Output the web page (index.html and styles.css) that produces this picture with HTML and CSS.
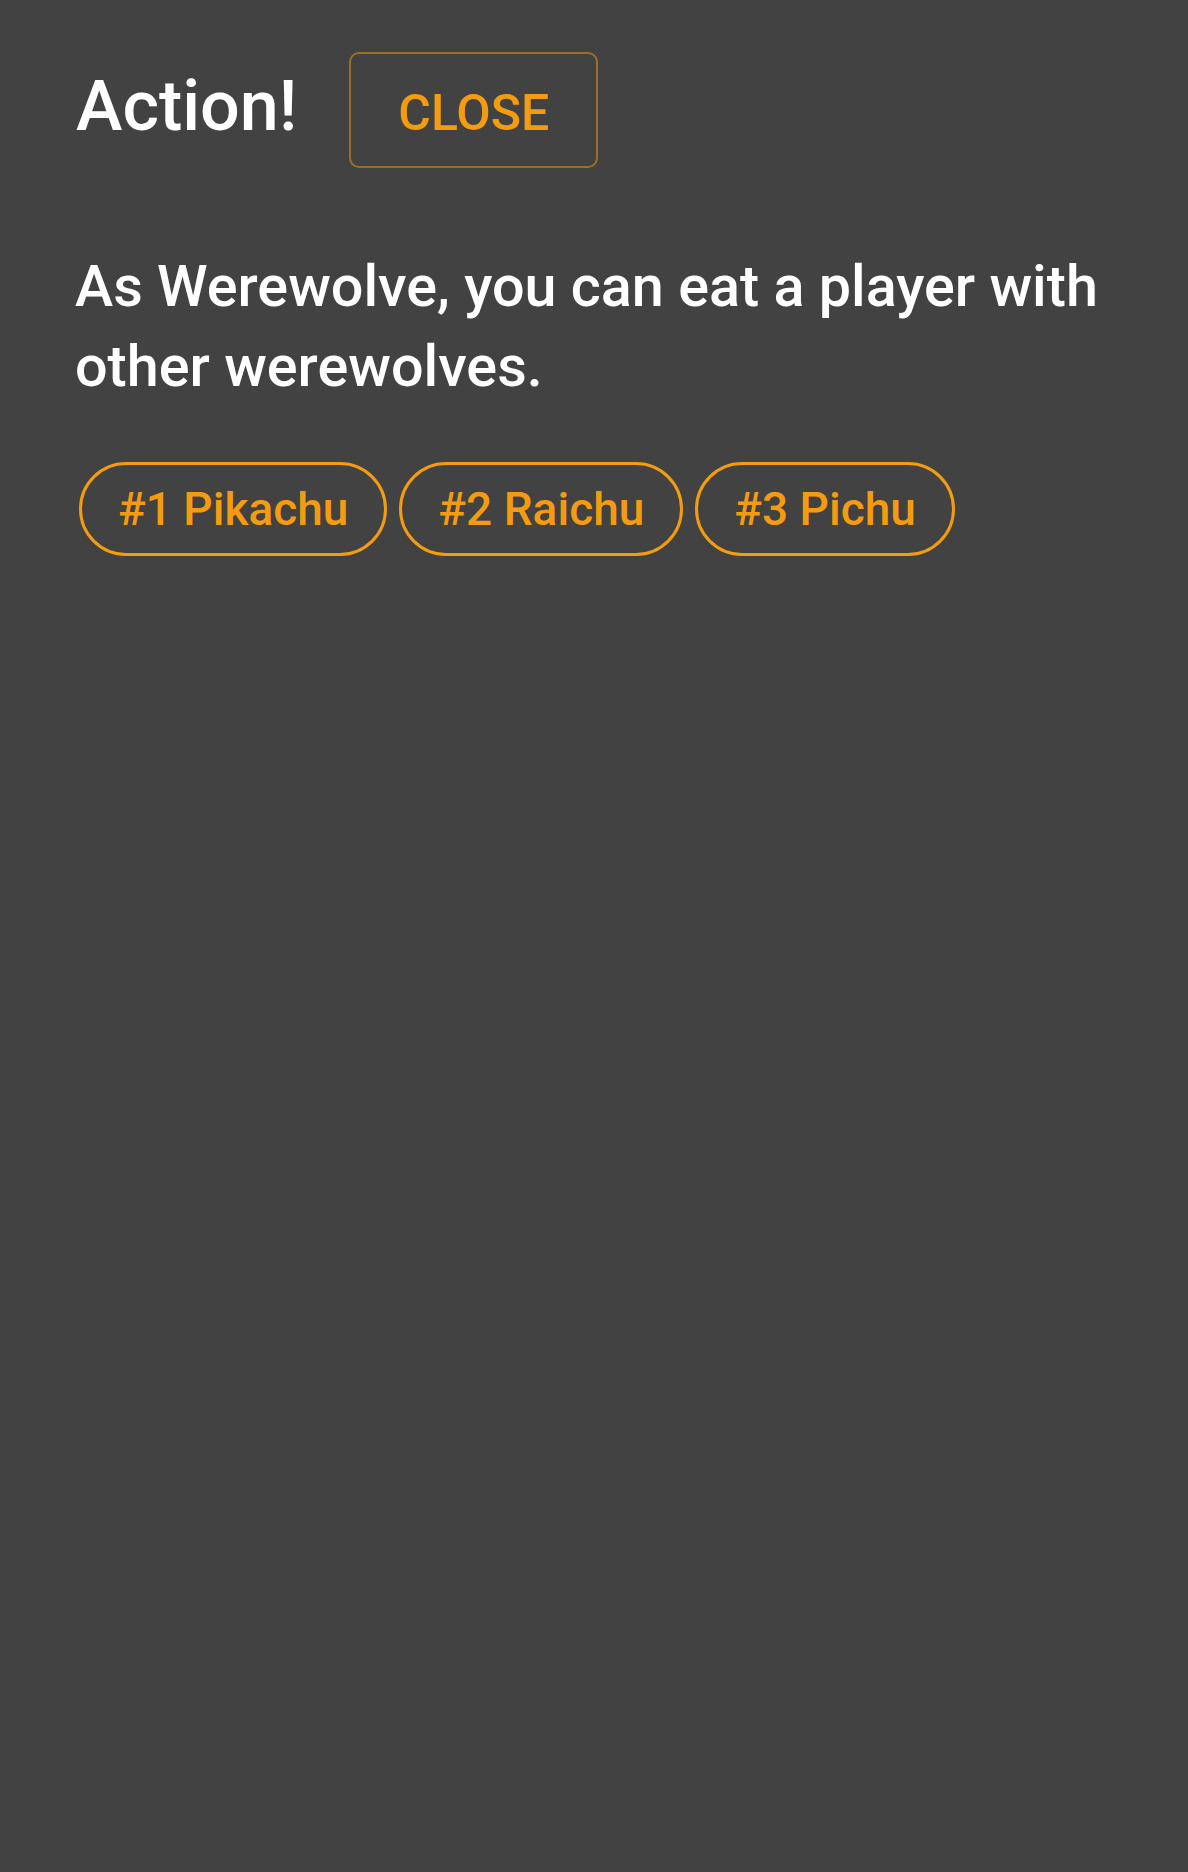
FILE: index.html
```html
<!DOCTYPE html>
<html lang="en">
<head>
<meta charset="utf-8">
<title>Action!</title>
<link rel="stylesheet" href="styles.css">
</head>
<body>
<main class="panel">
  <header class="panel-head">
    <h1 class="title">Action!</h1>
    <button class="close-btn" type="button">CLOSE</button>
  </header>
  <p class="desc">As Werewolve, you can eat a player with other werewolves.</p>
  <div class="choices">
    <button class="chip" type="button">#1 Pikachu</button>
    <button class="chip" type="button">#2 Raichu</button>
    <button class="chip" type="button">#3 Pichu</button>
  </div>
</main>
</body>
</html>
```
FILE: styles.css
```css
html, body {
  margin: 0;
  padding: 0;
  background: #424242;
  min-height: 100%;
}
body {
  font-family: Roboto, "Noto Sans", "DejaVu Sans", sans-serif;
  color: #ffffff;
  min-height: 1872px;
}
.panel {
  padding: 52px 73px 0 73px;
}
.panel-head {
  display: flex;
  align-items: baseline;
  gap: 52px;
}
.title {
  margin: 0;
  font-size: 70px;
  font-weight: 500;
  line-height: 1;
  color: #ffffff;
  padding-left: 3px;
}
.close-btn {
  font-family: inherit;
  font-size: 50px;
  font-weight: 500;
  line-height: 1;
  color: #f39c12;
  background: transparent;
  border: 2px solid rgba(243, 156, 18, 0.5);
  border-radius: 10px;
  width: 249px;
  height: 116px;
  padding: 6px 0 0 0;
  cursor: pointer;
}
.desc {
  margin: 79px 0 0 0;
  font-size: 57.5px;
  font-weight: 500;
  line-height: 80px;
  color: #ffffff;
  padding-left: 2px;
}
.choices {
  display: flex;
  flex-wrap: wrap;
  margin-top: 49px;
}
.chip {
  font-family: inherit;
  font-size: 46px;
  font-weight: 500;
  line-height: 1;
  color: #f39c12;
  background: transparent;
  border: 3px solid #f39c12;
  border-radius: 999px;
  height: 94px;
  padding: 0 36px;
  margin: 6px;
  cursor: pointer;
}
```
